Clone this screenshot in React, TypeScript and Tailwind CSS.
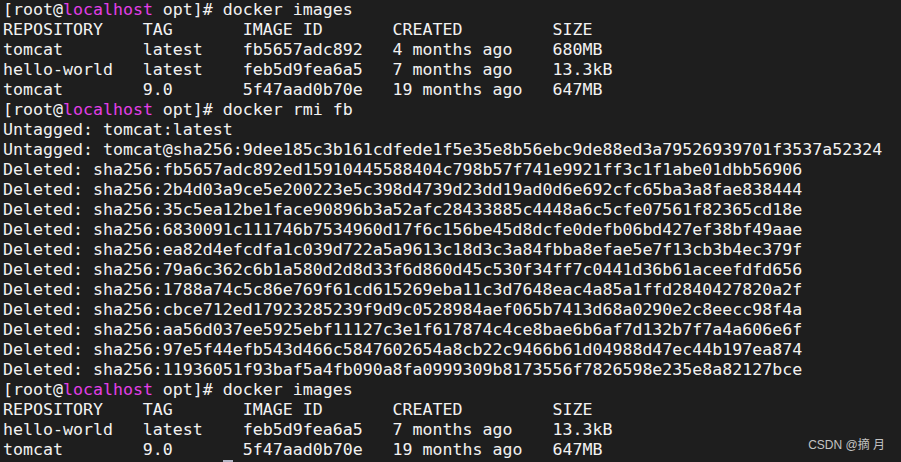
import React from "react";

const lines: string[] = [
    "$PROMPT docker images",
    "REPOSITORY    TAG       IMAGE ID       CREATED         SIZE",
    "tomcat        latest    fb5657adc892   4 months ago    680MB",
    "hello-world   latest    feb5d9fea6a5   7 months ago    13.3kB",
    "tomcat        9.0       5f47aad0b70e   19 months ago   647MB",
    "$PROMPT docker rmi fb",
    "Untagged: tomcat:latest",
    "Untagged: tomcat@sha256:9dee185c3b161cdfede1f5e35e8b56ebc9de88ed3a79526939701f3537a52324",
    "Deleted: sha256:fb5657adc892ed15910445588404c798b57f741e9921ff3c1f1abe01dbb56906",
    "Deleted: sha256:2b4d03a9ce5e200223e5c398d4739d23dd19ad0d6e692cfc65ba3a8fae838444",
    "Deleted: sha256:35c5ea12be1face90896b3a52afc28433885c4448a6c5cfe07561f82365cd18e",
    "Deleted: sha256:6830091c111746b7534960d17f6c156be45d8dcfe0defb06bd427ef38bf49aae",
    "Deleted: sha256:ea82d4efcdfa1c039d722a5a9613c18d3c3a84fbba8efae5e7f13cb3b4ec379f",
    "Deleted: sha256:79a6c362c6b1a580d2d8d33f6d860d45c530f34ff7c0441d36b61aceefdfd656",
    "Deleted: sha256:1788a74c5c86e769f61cd615269eba11c3d7648eac4a85a1ffd2840427820a2f",
    "Deleted: sha256:cbce712ed17923285239f9d9c0528984aef065b7413d68a0290e2c8eecc98f4a",
    "Deleted: sha256:aa56d037ee5925ebf11127c3e1f617874c4ce8bae6b6af7d132b7f7a4a606e6f",
    "Deleted: sha256:97e5f44efb543d466c5847602654a8cb22c9466b61d04988d47ec44b197ea874",
    "Deleted: sha256:11936051f93baf5a4fb090a8fa0999309b8173556f7826598e235e8a82127bce",
    "$PROMPT docker images",
    "REPOSITORY    TAG       IMAGE ID       CREATED         SIZE",
    "hello-world   latest    feb5d9fea6a5   7 months ago    13.3kB",
    "tomcat        9.0       5f47aad0b70e   19 months ago   647MB",
];

function Line({ text }: { text: string }) {
    if (text.startsWith("$PROMPT")) {
        return (
            <div className="h-5 leading-5">
                [root@<span className="text-[#e23fe6]">localhost</span> opt]#{text.slice(7)}
            </div>
        );
    }
    return <div className="h-5 leading-5">{text}</div>;
}

export default function App() {
    return (
        <div className="relative w-[901px] h-[462px] overflow-hidden bg-[#1e1e1e]">
            <div
                className="pl-[3px] whitespace-pre text-[#f2f2f2] text-[16.6px]"
                style={{ fontFamily: '"DejaVu Sans Mono", monospace' }}
            >
                {lines.map((l, i) => (
                    <Line key={i} text={l} />
                ))}
                <div className="ml-[220px] w-[10px] h-[4px] bg-[#b4b4c4]"></div>
            </div>
            <div
                className="absolute right-[16px] bottom-[8px] text-[12px] text-[#c4c4c4]"
                style={{ fontFamily: '"Liberation Sans", "Noto Sans CJK SC", sans-serif' }}
            >
                CSDN @摘 月
            </div>
        </div>
    );
}
